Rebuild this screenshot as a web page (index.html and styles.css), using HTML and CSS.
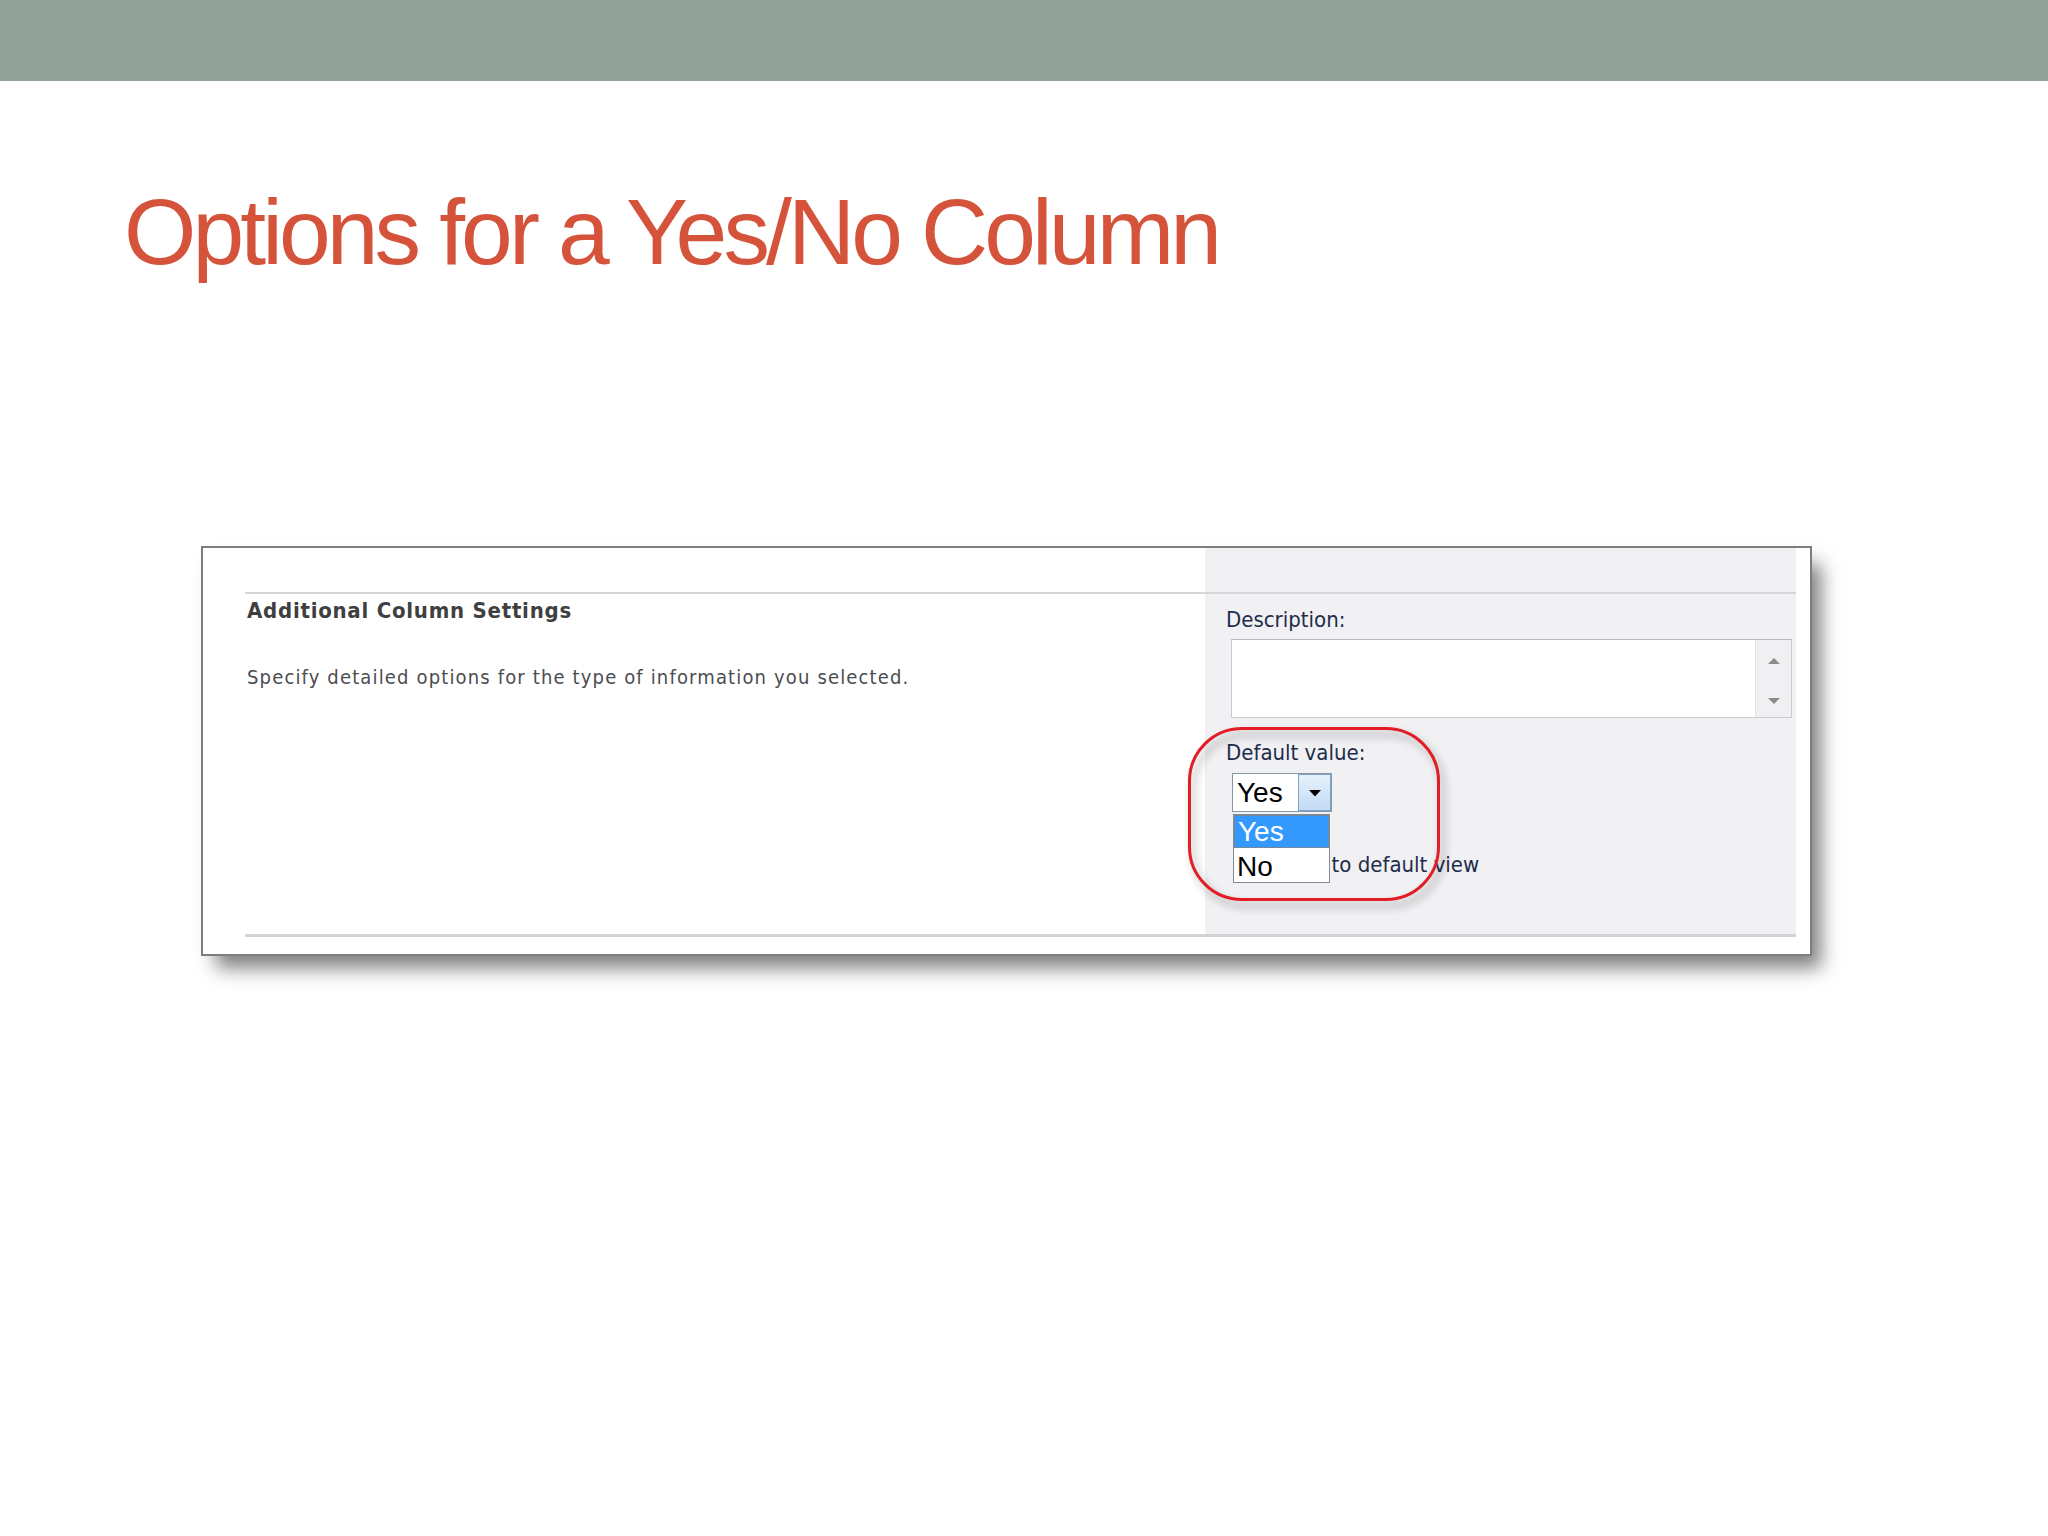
FILE: index.html
```html
<!DOCTYPE html>
<html lang="en">
<head>
<meta charset="utf-8">
<title>Options for a Yes/No Column</title>
<link rel="stylesheet" href="styles.css">
</head>
<body>
<header class="topbar"></header>
<h1 class="title">Options for a Yes/No Column</h1>
<section class="shot">
  <div class="shot-inner">
    <div class="col col-left">
      <div class="col-body">
        <h2 class="section-title">Additional Column Settings</h2>
        <p class="section-desc">Specify detailed options for the type of information you selected.</p>
      </div>
    </div>
    <div class="col col-right">
      <div class="col-body">
        <div class="field-label">Description:</div>
        <div class="textarea">
          <div class="ta-text"></div>
          <div class="ta-scroll">
            <svg class="ta-arrow" width="14" height="8" viewBox="0 0 14 8"><path d="M7 1 L13 7 L1 7 Z" fill="#8c8c8c"/></svg>
            <svg class="ta-arrow" width="14" height="8" viewBox="0 0 14 8"><path d="M1 1 L13 1 L7 7 Z" fill="#8c8c8c"/></svg>
          </div>
        </div>
        <div class="default-field">
          <div class="field-label">Default value:</div>
          <div class="select-wrap">
            <div class="select">
              <span class="select-value">Yes</span>
              <span class="select-btn">
                <svg width="14" height="8" viewBox="0 0 14 8"><path d="M1 1 L13 1 L7 7.5 Z" fill="#000"/></svg>
              </span>
            </div>
            <ul class="select-list">
              <li class="opt opt-selected">Yes</li>
              <li class="opt">No</li>
            </ul>
          </div>
          <div class="check-row">
            <span class="checkbox"></span>
            <span class="check-text">Add to default view</span>
          </div>
          <div class="annotation"></div>
        </div>
      </div>
    </div>
  </div>
</section>
</body>
</html>
```

FILE: styles.css
```css
html, body {
  margin: 0;
  padding: 0;
  background: #ffffff;
}

body {
  width: 2048px;
  height: 1536px;
  overflow: hidden;
  font-family: "Liberation Sans", Arial, sans-serif;
}

.topbar {
  height: 81px;
  background: #93a39b;
}

.title {
  margin: 105px 0 0 0;
  padding-left: 124px;
  height: 93px;
  font-family: "Liberation Sans", Arial, sans-serif;
  font-weight: normal;
  font-size: 93px;
  line-height: 93px;
  letter-spacing: -3.9px;
  color: #d4533a;
  white-space: nowrap;
}

.shot {
  margin: 267px 0 0 201px;
  width: 1611px;
  box-sizing: border-box;
  border: 2px solid #7e7e7e;
  background: #ffffff;
  box-shadow: 12px 15px 18px -3px rgba(0, 0, 0, 0.5);
}

.shot-inner {
  margin: 0 14px 17px 42px;
  display: grid;
  grid-template-columns: 960px 591px;
  border-bottom: 3px solid #d3d3d6;
}

.col {
  padding-top: 44px;
}

.col-right {
  background: #f1f0f3;
}

.col-body {
  height: 342px;
  border-top: 2px solid #d6d6d9;
}

.col-left .col-body {
  padding-top: 4px;
  padding-left: 2px;
  box-sizing: border-box;
}

.section-title {
  margin: 0;
  font-family: "DejaVu Sans", Verdana, sans-serif;
  font-stretch: condensed;
  font-weight: bold;
  font-size: 22px;
  line-height: 26px;
  letter-spacing: 0.75px;
  color: #3f3f42;
}

.section-desc {
  margin: 41px 0 0 0;
  font-family: "DejaVu Sans", Verdana, sans-serif;
  font-stretch: condensed;
  font-size: 20px;
  line-height: 24px;
  letter-spacing: 1.15px;
  color: #4d4d50;
}

.col-right .col-body {
  padding: 13px 4px 0 21px;
  box-sizing: border-box;
}

.field-label {
  font-family: "DejaVu Sans", Verdana, sans-serif;
  font-stretch: condensed;
  font-size: 22px;
  line-height: 26px;
  color: #1e2d4a;
}

.textarea {
  margin: 6px 0 0 5px;
  height: 79px;
  box-sizing: border-box;
  border: 1px solid #cbcbce;
  border-top-color: #b9b9bd;
  background: #ffffff;
  display: flex;
}

.ta-text {
  flex: 1;
}

.ta-scroll {
  width: 35px;
  background: #f0f0f2;
  border-left: 1px solid #e2e2e5;
  display: flex;
  flex-direction: column;
  align-items: center;
  justify-content: space-between;
  padding: 17px 0 12px 0;
}

.ta-arrow {
  display: block;
}

.default-field {
  position: relative;
  margin-top: 22px;
}

.select-wrap {
  position: relative;
  margin: 7px 0 0 6px;
  width: 100px;
}

.select {
  height: 39px;
  box-sizing: border-box;
  border: 1px solid #8797a8;
  background: #ffffff;
  display: flex;
  align-items: stretch;
}

.select-value {
  flex: 1;
  padding-left: 4px;
  font-family: "Liberation Sans", Arial, sans-serif;
  font-size: 28px;
  line-height: 37px;
  color: #000000;
}

.select-btn {
  width: 33px;
  box-sizing: border-box;
  border: 1px solid #7fa2c8;
  background: linear-gradient(#e6f1fc, #c3dbf4);
  display: flex;
  align-items: center;
  justify-content: center;
}

.select-list {
  position: absolute;
  top: 41px;
  left: 1px;
  width: 97px;
  height: 69px;
  margin: 0;
  padding: 0;
  list-style: none;
  box-sizing: border-box;
  border: 1px solid #7f8b98;
  background: #ffffff;
  z-index: 2;
}

.opt {
  height: 33px;
  box-sizing: border-box;
  padding-left: 3px;
  font-family: "Liberation Sans", Arial, sans-serif;
  font-size: 28px;
  line-height: 31px;
  color: #000000;
}

.opt-selected {
  background: #3399ff;
  color: #ffffff;
  border: 1px dotted #b0783c;
}

.opt + .opt {
  padding-top: 3px;
}

.check-row {
  margin-top: 40px;
  display: flex;
  align-items: center;
  padding-left: 36px;
  font-family: "DejaVu Sans", Verdana, sans-serif;
  font-stretch: condensed;
  font-size: 22px;
  line-height: 26px;
  color: #1e2d4a;
}

.checkbox {
  width: 13px;
  height: 13px;
  border: 1px solid #1c5180;
  background: #ffffff;
  margin-right: 10px;
}

.annotation {
  position: absolute;
  left: -38px;
  top: -13px;
  width: 252px;
  height: 174px;
  box-sizing: border-box;
  border: 3.5px solid #e31d25;
  border-radius: 54px;
  filter: drop-shadow(4px 6px 4px rgba(0, 0, 0, 0.35));
  z-index: 3;
  pointer-events: none;
}
```
